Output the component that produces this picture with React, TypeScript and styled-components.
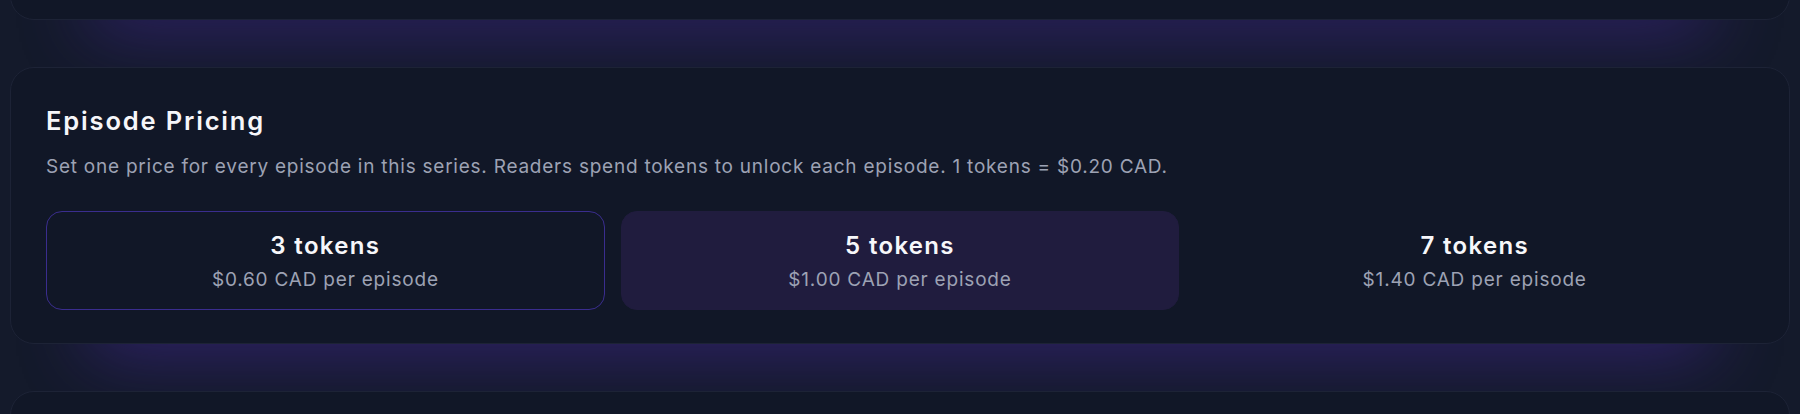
import React, { useState } from "react";
import styled, { createGlobalStyle, css } from "styled-components";

const GlobalStyle = createGlobalStyle`
  html, body {
    margin: 0;
    padding: 0;
    background: #141a2b;
    font-family: Inter, "Open Sans", "Noto Sans", sans-serif;
    -webkit-font-smoothing: antialiased;
  }
  * { box-sizing: border-box; }
`;

/* Visible window of the settings page, scrolled part-way down */
const Viewport = styled.div`
  height: 414px;
  overflow: hidden;
`;

const Page = styled.div`
  display: flex;
  flex-direction: column;
  gap: 47px;
  padding: 0 10px;
  margin-top: -200px;
`;

const Panel = styled.section<{ $tall?: boolean }>`
  flex-shrink: 0;
  background: #111727;
  border: 1px solid #1d2336;
  border-radius: 24px;
  /* violet glow that spills out under each panel */
  box-shadow: 0 92px 70px -80px rgba(88, 44, 196, 0.4);
  padding: 35px 35px 33px;
  ${(p) =>
    p.$tall &&
    css`
      min-height: 220px;
    `}
`;

const Title = styled.h2`
  margin: 0;
  font-size: 25.5px;
  line-height: 36px;
  font-weight: 600;
  letter-spacing: 0.072em;
  color: #f6f6f9;
`;

const Description = styled.p`
  margin: 14px 0 0;
  font-size: 19px;
  line-height: 28px;
  font-weight: 400;
  letter-spacing: 0.04em;
  color: #9da2b4;
`;

const Options = styled.div`
  margin-top: 30px;
  display: grid;
  grid-template-columns: repeat(3, 1fr);
  gap: 16px;
`;

const Option = styled.button<{ $tone: "outlined" | "filled" | "plain" }>`
  display: flex;
  flex-direction: column;
  align-items: center;
  gap: 5.5px;
  padding: 17.5px 16px 16px;
  border-radius: 16px;
  border: 1px solid transparent;
  background: transparent;
  font-family: inherit;
  cursor: pointer;
  ${(p) =>
    p.$tone === "outlined" &&
    css`
      border-color: #3a2d8e;
    `}
  ${(p) =>
    p.$tone === "filled" &&
    css`
      background: #201c3e;
      border-color: #201c3e;
    `}
`;

const OptionTokens = styled.span`
  font-size: 24px;
  line-height: 32px;
  font-weight: 600;
  letter-spacing: 0.055em;
  color: #f7f7fa;
`;

const OptionPrice = styled.span`
  font-size: 19px;
  line-height: 26px;
  font-weight: 400;
  letter-spacing: 0.042em;
  color: #9da2b4;
`;

const RATE = 0.2;
const tiers = [3, 5, 7];

export default function App() {
  const [selected] = useState(3);
  const [hovered, setHovered] = useState<number | null>(5);

  return (
    <>
      <GlobalStyle />
      <Viewport>
        <Page>
          <Panel $tall />
          <Panel>
            <Title>Episode Pricing</Title>
            <Description>
              Set one price for every episode in this series. Readers spend tokens to unlock each
              episode. 1 tokens = ${RATE.toFixed(2)} CAD.
            </Description>
            <Options>
              {tiers.map((t) => (
                <Option
                  key={t}
                  $tone={t === selected ? "outlined" : t === hovered ? "filled" : "plain"}
                  onMouseEnter={() => setHovered(t)}
                >
                  <OptionTokens>{t} tokens</OptionTokens>
                  <OptionPrice>${(t * RATE).toFixed(2)} CAD per episode</OptionPrice>
                </Option>
              ))}
            </Options>
          </Panel>
          <Panel $tall />
        </Page>
      </Viewport>
    </>
  );
}
